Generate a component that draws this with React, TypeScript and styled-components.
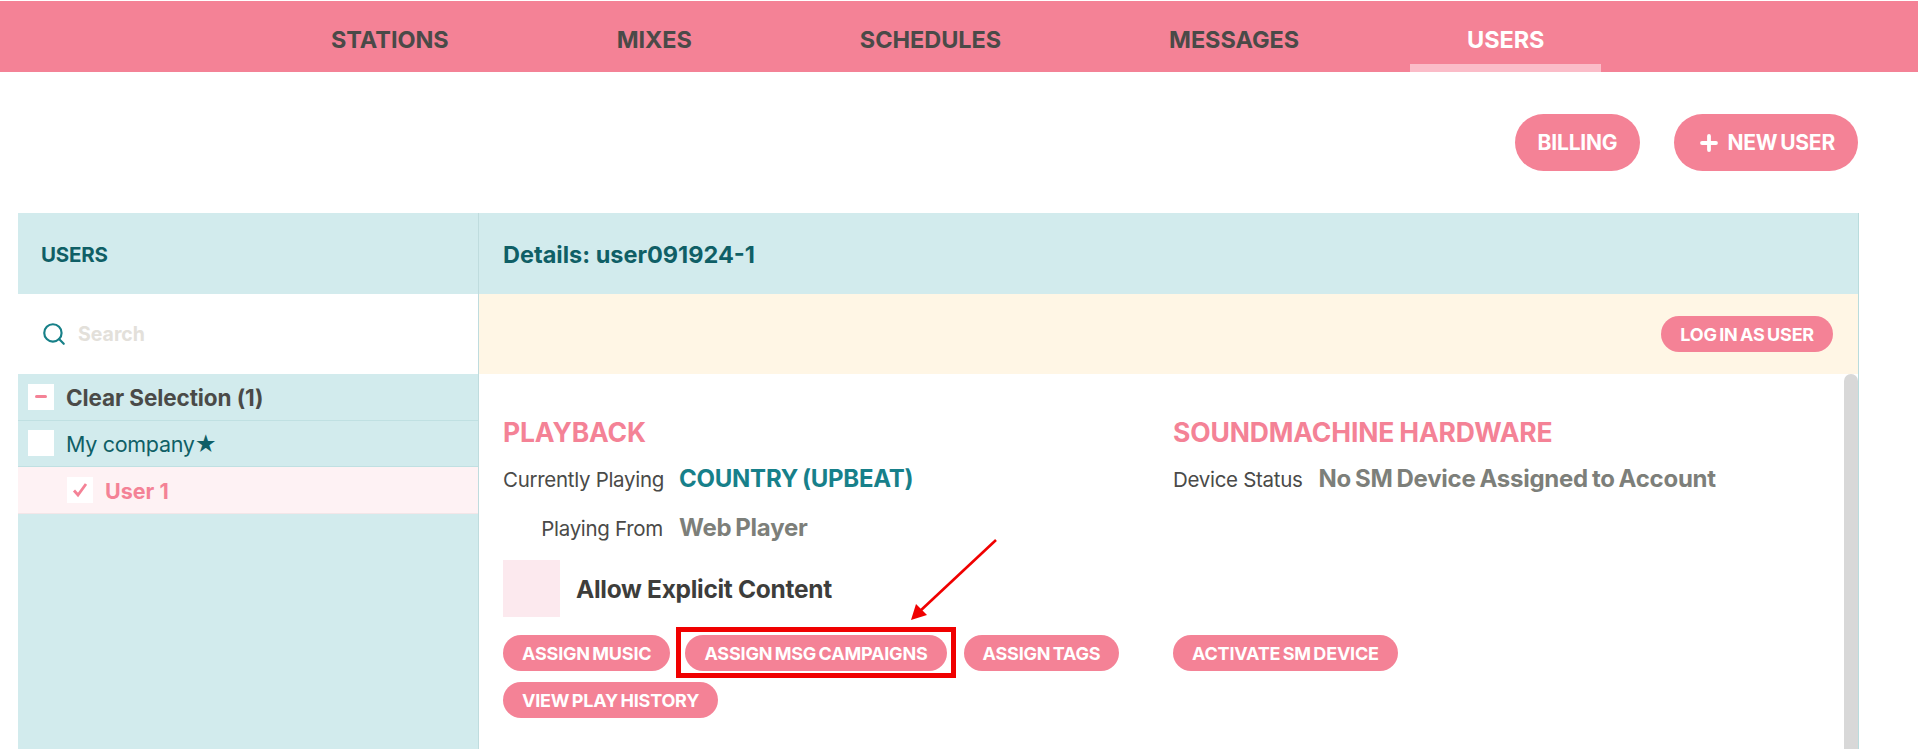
import React, { FunctionComponent } from 'react';
import styled, { createGlobalStyle } from 'styled-components';
import { Plus, Search } from 'lucide-react';

const pink = '#f48296';
const darkTeal = '#0f5f66';
const paleTeal = '#d2ebed';

const GlobalStyle = createGlobalStyle`
  html, body {
    margin: 0;
    padding: 0;
    height: 100%;
    overflow: hidden;
    background: #fff;
  }
  body {
    font-family: Inter, "Liberation Sans", sans-serif;
    color: #4a4a48;
  }
  * {
    box-sizing: border-box;
  }
`;

const Page = styled.div`
  width: 1918px;
  height: 749px;
  padding-top: 1px;
  display: flex;
  flex-direction: column;
  overflow: hidden;
`;

const Nav = styled.nav`
  height: 71px;
  flex: none;
  display: flex;
  padding-left: 247px;
  background: ${pink};
`;

const NavItem = styled.a<{ $active?: boolean }>`
  margin: 0 27px;
  padding: 5px 57px 0;
  display: flex;
  align-items: center;
  font-size: 23.5px;
  font-weight: 700;
  letter-spacing: -0.06px;
  color: ${(p) => (p.$active ? '#fff' : '#4a4a48')};
  box-shadow: inset 0 -8px 0 ${(p) => (p.$active ? '#fbbcc8' : 'transparent')};
`;

const Toolbar = styled.div`
  height: 141px;
  flex: none;
  display: flex;
  justify-content: flex-end;
  align-items: flex-start;
  gap: 34px;
  padding: 42px 60px 0 0;
`;

const BigButton = styled.button`
  height: 57px;
  padding: 0 23px;
  display: flex;
  align-items: center;
  gap: 6px;
  border: 0;
  border-radius: 29px;
  background: ${pink};
  color: #fff;
  font: 700 21px Inter, sans-serif;
  letter-spacing: -0.2px;
  word-spacing: -2px;
`;

const Panel = styled.section`
  flex: 1;
  min-height: 0;
  margin: 0 59px 0 18px;
  display: flex;
  border-right: 1px solid #b9dcdd;
`;

const Sidebar = styled.aside`
  width: 461px;
  flex: none;
  display: flex;
  flex-direction: column;
  background: ${paleTeal};
  border-right: 1px solid #bfdcde;
`;

const SidebarHeader = styled.h2`
  height: 81px;
  margin: 0;
  padding: 2px 0 0 23px;
  display: flex;
  align-items: center;
  font-size: 20.5px;
  font-weight: 700;
  letter-spacing: -0.2px;
  color: ${darkTeal};
`;

const SearchRow = styled.div`
  height: 80px;
  padding-left: 23px;
  display: flex;
  align-items: center;
  gap: 11px;
  background: #fff;
  color: #178088;
`;

const SearchInput = styled.span`
  font-size: 19.5px;
  font-weight: 700;
  color: #e3e0da;
`;

const TreeRow = styled.div<{ $selected?: boolean; $nested?: boolean }>`
  height: 46.5px;
  padding-left: ${(p) => (p.$nested ? '49px' : '10px')};
  display: flex;
  align-items: center;
  gap: 12px;
  background: ${(p) => (p.$selected ? '#fef2f4' : 'transparent')};
  border-bottom: 1px solid ${(p) => (p.$selected ? '#f3e6e8' : '#c0e0e2')};
  font-size: 21.5px;
`;

const TreeBox = styled.span`
  width: 26px;
  height: 26px;
  flex: none;
  display: flex;
  align-items: center;
  justify-content: center;
  background: #fff;
`;

const Dash = styled.span`
  width: 12px;
  height: 3px;
  border-radius: 2px;
  background: ${pink};
`;

const ClearLabel = styled.span`
  padding-top: 2px;
  font-size: 22.5px;
  font-weight: 700;
  letter-spacing: -0.1px;
`;

const CompanyLabel = styled.span`
  padding-top: 2px;
  color: ${darkTeal};
  letter-spacing: -0.3px;
`;

const UserLabel = styled.span`
  padding-top: 2px;
  font-weight: 700;
  color: ${pink};
`;

const Main = styled.div`
  flex: 1;
  min-width: 0;
  display: flex;
  flex-direction: column;
`;

const MainHeader = styled.h1`
  height: 81px;
  flex: none;
  margin: 0;
  padding: 2px 0 0 24px;
  display: flex;
  align-items: center;
  font-size: 23.5px;
  font-weight: 700;
  color: ${darkTeal};
  background: ${paleTeal};
`;

const Banner = styled.div`
  height: 80px;
  flex: none;
  padding-right: 25px;
  display: flex;
  align-items: center;
  justify-content: flex-end;
  background: #fff6e5;
`;

const Body = styled.div`
  flex: 1;
  min-height: 0;
  display: flex;
`;

const Columns = styled.div`
  flex: 1;
  padding: 43px 0 0 24px;
  display: grid;
  grid-template-columns: 670px 1fr;
`;

const Scrollbar = styled.div`
  width: 14px;
  flex: none;
  border-radius: 7px 7px 0 0;
  background: #d8d8d8;
`;

const Column = styled.div`
  display: flex;
  flex-direction: column;
`;

const SectionTitle = styled.h3`
  margin: 0 0 7px;
  height: 30px;
  line-height: 30px;
  font-size: 26.5px;
  font-weight: 700;
  letter-spacing: -0.15px;
  word-spacing: -1px;
  white-space: nowrap;
  color: ${pink};
`;

const InfoRow = styled.div`
  height: 49px;
  display: flex;
  align-items: center;
  gap: 16px;
`;

const InfoLabel = styled.span<{ $wide?: boolean }>`
  width: ${(p) => (p.$wide ? '160px' : 'auto')};
  padding-top: 1px;
  text-align: right;
  font-size: 20.5px;
  letter-spacing: -0.3px;
  white-space: nowrap;
`;

const InfoValue = styled.span<{ $teal?: boolean }>`
  font-size: 24px;
  font-weight: 700;
  letter-spacing: -0.25px;
  word-spacing: -1.5px;
  white-space: nowrap;
  color: ${(p) => (p.$teal ? '#17808a' : '#7d7f7a')};
`;

const ExplicitRow = styled.div`
  margin-top: 8px;
  display: flex;
  align-items: center;
  gap: 16px;
  font-size: 24.5px;
  font-weight: 700;
  letter-spacing: -0.3px;
  color: #3d3d3b;
`;

const ExplicitBox = styled.span`
  width: 57px;
  height: 57px;
  background: #fce9ee;
`;

const Actions = styled.div<{ $top: number }>`
  margin-top: ${(p) => p.$top}px;
  display: flex;
  flex-wrap: wrap;
  gap: 11px 15px;
`;

const SmallButton = styled.button`
  height: 36px;
  padding: 0 19px;
  border: 0;
  border-radius: 18px;
  background: ${pink};
  color: #fff;
  font: 700 18px Inter, sans-serif;
  letter-spacing: -0.2px;
  word-spacing: -1.6px;
  white-space: nowrap;
`;

const Callout = styled.span`
  position: relative;
  display: inline-flex;
  margin-right: 2px;
`;

const CalloutFrame = styled.span`
  position: absolute;
  inset: -8px -9px -7px -9px;
  border: 5px solid #f00000;
  pointer-events: none;
`;

const CalloutArrow = styled.svg`
  position: absolute;
  left: 210px;
  top: -105px;
  width: 110px;
  height: 100px;
  overflow: visible;
  pointer-events: none;
`;

const CheckMark: FunctionComponent = () => (
  <svg width='16' height='16' viewBox='0 0 16 16' fill='none'>
    <path d='M2 8.5 6 13 14 2' stroke={pink} strokeWidth='2.8' />
  </svg>
);

const App: FunctionComponent = (): JSX.Element => {
  return (
    <>
      <GlobalStyle />
      <Page>
        <Nav>
          <NavItem>STATIONS</NavItem>
          <NavItem>MIXES</NavItem>
          <NavItem>SCHEDULES</NavItem>
          <NavItem>MESSAGES</NavItem>
          <NavItem $active>USERS</NavItem>
        </Nav>
        <Toolbar>
          <BigButton>BILLING</BigButton>
          <BigButton>
            <Plus size={24} strokeWidth={3.8} />
            NEW USER
          </BigButton>
        </Toolbar>
        <Panel>
          <Sidebar>
            <SidebarHeader>USERS</SidebarHeader>
            <SearchRow>
              <Search size={26} strokeWidth={2} />
              <SearchInput>Search</SearchInput>
            </SearchRow>
            <TreeRow>
              <TreeBox>
                <Dash />
              </TreeBox>
              <ClearLabel>Clear Selection (1)</ClearLabel>
            </TreeRow>
            <TreeRow>
              <TreeBox />
              <CompanyLabel>My company★</CompanyLabel>
            </TreeRow>
            <TreeRow $selected $nested>
              <TreeBox>
                <CheckMark />
              </TreeBox>
              <UserLabel>User 1</UserLabel>
            </TreeRow>
          </Sidebar>
          <Main>
            <MainHeader>Details: user091924-1</MainHeader>
            <Banner>
              <SmallButton>LOG IN AS USER</SmallButton>
            </Banner>
            <Body>
              <Columns>
                <Column>
                  <SectionTitle>PLAYBACK</SectionTitle>
                  <InfoRow>
                    <InfoLabel $wide>Currently Playing</InfoLabel>
                    <InfoValue $teal>COUNTRY (UPBEAT)</InfoValue>
                  </InfoRow>
                  <InfoRow>
                    <InfoLabel $wide>Playing From</InfoLabel>
                    <InfoValue>Web Player</InfoValue>
                  </InfoRow>
                  <ExplicitRow>
                    <ExplicitBox />
                    Allow Explicit Content
                  </ExplicitRow>
                  <Actions $top={18}>
                    <SmallButton>ASSIGN MUSIC</SmallButton>
                    <Callout>
                      <SmallButton>ASSIGN MSG CAMPAIGNS</SmallButton>
                      <CalloutFrame />
                      <CalloutArrow viewBox='0 0 110 100'>
                        <path d='M101 10 24 82' stroke='#f00000' strokeWidth='2.6' fill='none' />
                        <path d='M16 90 21 74 32 85Z' fill='#f00000' />
                      </CalloutArrow>
                    </Callout>
                    <SmallButton>ASSIGN TAGS</SmallButton>
                    <SmallButton>VIEW PLAY HISTORY</SmallButton>
                  </Actions>
                </Column>
                <Column>
                  <SectionTitle>SOUNDMACHINE HARDWARE</SectionTitle>
                  <InfoRow>
                    <InfoLabel>Device Status</InfoLabel>
                    <InfoValue>No SM Device Assigned to Account</InfoValue>
                  </InfoRow>
                  <Actions $top={132}>
                    <SmallButton>ACTIVATE SM DEVICE</SmallButton>
                  </Actions>
                </Column>
              </Columns>
              <Scrollbar />
            </Body>
          </Main>
        </Panel>
      </Page>
    </>
  );
};

export default App;
